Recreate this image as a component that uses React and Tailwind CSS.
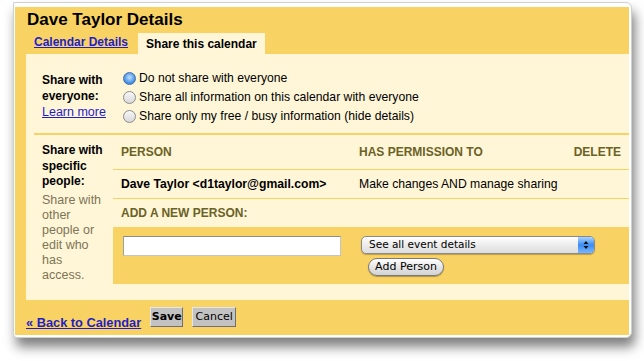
import React from 'react';

const Radio = ({ checked }) => (
  <span
    className={`inline-block w-[13px] h-[13px] rounded-full border shrink-0 ${
      checked
        ? 'border-[#3f6ea8] bg-[radial-gradient(circle_at_50%_40%,#bfe0ff,#3d8ce3_70%)]'
        : 'border-[#8a8a8a] bg-[linear-gradient(#f7f7f7,#d9d9d9)]'
    } flex items-center justify-center`}
  >
    {checked && <span className="w-[5px] h-[5px] rounded-full bg-[#0d1f3a]" />}
  </span>
);

const App = () => {
  return (
    <div className="w-[644px] h-[361px] bg-white pt-[2px] pl-[13px] font-['Liberation_Sans',Arial,sans-serif]">
      {/* window frame */}
      <div className="w-[619px] h-[336px] bg-white rounded-r-[6px] rounded-bl-[4px] border border-[#d0d0d0] shadow-[3px_9px_12px_rgba(0,0,0,0.5)] pt-[4px] pl-[1px] pr-[2px] pb-[2px]">
        <div className="h-full bg-[#f9d264] flex flex-col">
          {/* title */}
          <div className="h-[26px] pl-[12px] pt-[3px] text-[17px] font-bold text-black leading-[20px]">
            Dave Taylor Details
          </div>

          {/* tabs */}
          <div className="h-[21px] flex items-end pl-[19px]">
            <a href="#" className="text-[12px] font-bold text-[#1f1fc8] underline leading-[16px] mb-[4px]">
              Calendar Details
            </a>
            <div className="ml-[10px] h-[21px] bg-[#fff6d8] px-[8px] flex items-center text-[12px] font-bold text-black">
              Share this calendar
            </div>
          </div>

          {/* panel */}
          <div className="ml-[11px] h-[246px] bg-[#fff6d8] flex flex-col">
            {/* share with everyone */}
            <div className="h-[79px] flex pt-[18px]">
              <div className="w-[97px] pl-[16px] text-[12px] leading-[16px]">
                <div className="font-bold text-black">Share with everyone:</div>
                <a href="#" className="text-[#1f1fc8] underline text-[12.5px]">Learn more</a>
              </div>
              <div className="flex flex-col gap-[6px] text-[12.2px] text-black leading-[13px]">
                <label className="flex items-center gap-[3px]"><Radio checked />Do not share with everyone</label>
                <label className="flex items-center gap-[3px]"><Radio />Share all information on this calendar with everyone</label>
                <label className="flex items-center gap-[3px]"><Radio />Share only my free / busy information (hide details)</label>
              </div>
            </div>

            <div className="ml-[8px] h-[2px] bg-[#f9d264]" />

            {/* share with specific people */}
            <div className="flex flex-1">
              <div className="w-[87px] pl-[16px] pt-[8px] text-[12px] leading-[15.5px]">
                <div className="font-bold text-black w-[70px]">Share with specific people:</div>
                <div className="mt-[3px] text-[12.5px] leading-[15px] text-[#7d7455] w-[60px]">Share with other people or edit who has access.</div>
              </div>
              <div className="flex-1 flex flex-col">
                <div className="h-[35px] flex items-end pb-[8px] text-[12px] font-bold text-[#6b6226] border-b border-[#f9d264]">
                  <div className="w-[246px] pl-[8px]">PERSON</div>
                  <div className="flex-1">HAS PERMISSION TO</div>
                  <div className="pr-[8px]">DELETE</div>
                </div>
                <div className="h-[29px] flex items-center text-[12.2px] text-black border-b border-[#f9d264]">
                  <div className="w-[246px] pl-[8px] font-bold">Dave Taylor &lt;d1taylor@gmail.com&gt;</div>
                  <div className="flex-1">Make changes AND manage sharing</div>
                </div>
                <div className="h-[28px] flex items-center pl-[8px] text-[12px] font-bold text-[#6b6226]">
                  ADD A NEW PERSON:
                </div>
                <div className="h-[57px] bg-[#f9d264] flex pt-[9px] pl-[10px]">
                  <input
                    type="text"
                    className="w-[218px] h-[20px] bg-white border border-[#c4c4c4] border-t-[#8c8c8c] border-l-[#a0a0a0] outline-none"
                  />
                  <div className="ml-[20px] flex flex-col items-start">
                    <div className="w-[234px] h-[18px] rounded-[5px] border border-[#8a8a8a] bg-[linear-gradient(#ffffff,#ececec_50%,#dedede)] flex items-center justify-between font-['DejaVu_Sans',sans-serif] text-[10.5px] text-black shadow-[0_1px_1px_rgba(0,0,0,0.25)]">
                      <span className="pl-[7px]">See all event details</span>
                      <span className="w-[16px] h-[16px] rounded-r-[4px] bg-[linear-gradient(#a9d3ff,#3b8cf0_50%,#79b6ff)] flex items-center justify-center">
                        <svg width="6" height="10" viewBox="0 0 6 10">
                          <path d="M3 1 L5.5 4 L0.5 4 Z M3 9 L5.5 6 L0.5 6 Z" fill="#111" />
                        </svg>
                      </span>
                    </div>
                    <button className="mt-[4px] ml-[7px] w-[76px] h-[18px] rounded-full border border-[#7a7a7a] bg-[linear-gradient(#ffffff,#e6e6e6_50%,#d2d2d2)] font-['DejaVu_Sans',sans-serif] text-[11px] text-black leading-[16px] shadow-[0_1px_1px_rgba(0,0,0,0.3)]">
                      Add Person
                    </button>
                  </div>
                </div>
                <div className="flex-1" />
              </div>
            </div>
          </div>

          {/* footer */}
          <div className="flex items-start pl-[11px] pt-[7px]">
            <a href="#" className="mt-[8px] text-[12.8px] font-bold text-[#1f1fc8] underline leading-[15px]">
              « Back to Calendar
            </a>
            <button className="ml-[9px] w-[33px] h-[20px] bg-[#c2c2c2] border border-[#e6e6e6] border-r-[#6f6f6f] border-b-[#6f6f6f] font-['DejaVu_Sans',sans-serif] text-[11px] font-bold text-black">
              Save
            </button>
            <button className="ml-[9px] w-[44px] h-[20px] bg-[#c2c2c2] border border-[#e6e6e6] border-r-[#6f6f6f] border-b-[#6f6f6f] font-['DejaVu_Sans',sans-serif] text-[11px] text-black">
              Cancel
            </button>
          </div>
        </div>
      </div>
    </div>
  );
};

export default App;
